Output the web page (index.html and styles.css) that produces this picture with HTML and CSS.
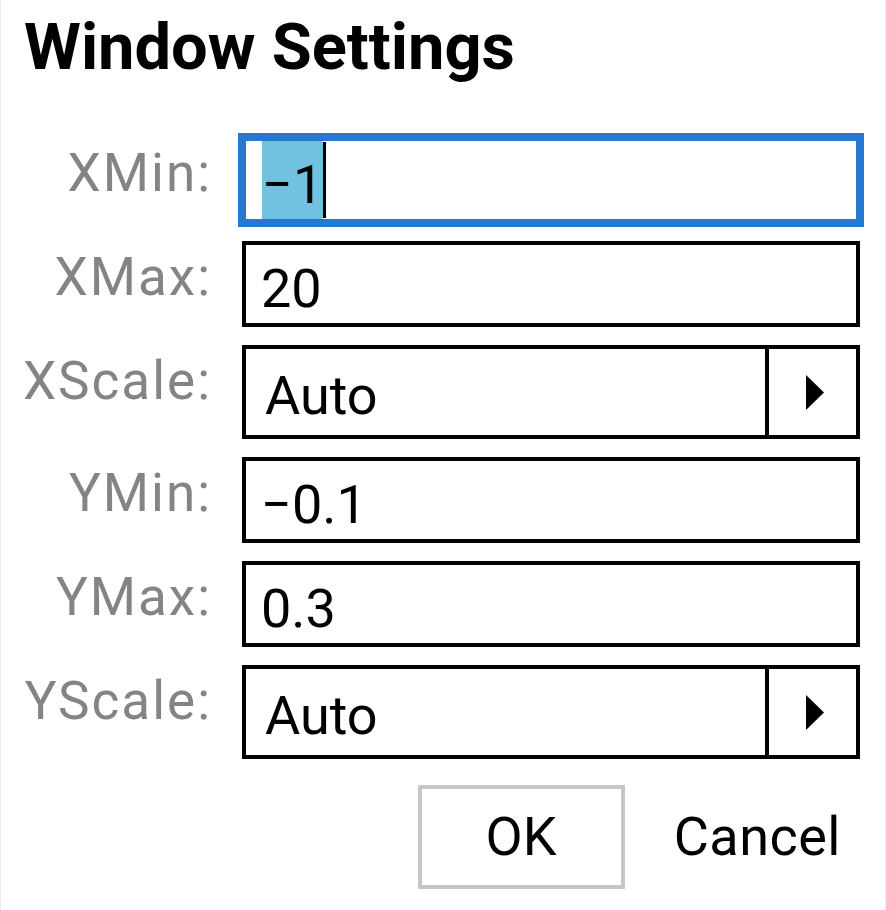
FILE: index.html
```html
<!DOCTYPE html>
<html lang="en">
<head>
<meta charset="utf-8">
<title>Window Settings</title>
<link rel="stylesheet" href="styles.css">
</head>
<body>
<div class="dialog">
  <h1 class="title">Window Settings</h1>
  <div class="form">
    <label class="label">XMin:</label>
    <div class="field field--focused"><span class="value value--selected">−1</span><span class="caret"></span></div>

    <label class="label">XMax:</label>
    <div class="field"><span class="value">20</span></div>

    <label class="label">XScale:</label>
    <div class="field field--select"><span class="value value--select">Auto</span><span class="arrow"><svg class="arrow-icon" width="18" height="35" viewBox="0 0 18 35"><polygon points="0,0 18,17.5 0,35" fill="#000"/></svg></span></div>

    <label class="label">YMin:</label>
    <div class="field"><span class="value">−0.1</span></div>

    <label class="label">YMax:</label>
    <div class="field"><span class="value">0.3</span></div>

    <label class="label">YScale:</label>
    <div class="field field--select"><span class="value value--select">Auto</span><span class="arrow"><svg class="arrow-icon" width="18" height="35" viewBox="0 0 18 35"><polygon points="0,0 18,17.5 0,35" fill="#000"/></svg></span></div>
  </div>
  <div class="actions">
    <button class="btn btn--ok">OK</button>
    <button class="btn btn--cancel">Cancel</button>
  </div>
</div>
</body>
</html>
```
FILE: styles.css
```css
html, body {
  margin: 0;
  padding: 0;
  background: #fff;
}

.dialog {
  width: 886px;
  height: 910px;
  box-sizing: border-box;
  border-left: 1px solid #ececec;
  border-right: 1px solid #ececec;
  font-family: Roboto, "Liberation Sans", sans-serif;
  color: #000;
  overflow: hidden;
}

.title {
  margin: 0;
  padding: 15px 0 0 23px;
  font-size: 65px;
  line-height: 65px;
  font-weight: 700;
  letter-spacing: 0;
}

.form {
  display: grid;
  grid-template-columns: 211px 618px;
  grid-template-rows: 86px 86px 94px 86px 86px 94px;
  column-gap: 30px;
  row-gap: 18px;
  margin-top: 57px;
}

.label {
  align-self: start;
  text-align: right;
  padding-top: 10px;
  font-size: 53px;
  line-height: 53px;
  color: #848484;
  letter-spacing: 2px;
}

.field {
  display: flex;
  box-sizing: border-box;
  border: 4px solid #000;
  background: #fff;
  padding-left: 15px;
}

.field--focused {
  border: 8px solid #2678d2;
  margin: -4px;
  padding-left: 16px;
}

.value {
  display: block;
  padding-top: 17px;
  font-size: 54px;
  line-height: 54px;
  white-space: nowrap;
}

.value--select {
  flex: 1;
  padding-top: 20px;
  padding-left: 4px;
}

.value--selected {
  background: #72c1e1;
}

.caret {
  width: 3px;
  margin: 1px 0;
  background: #000;
}

.arrow {
  width: 91px;
  box-sizing: border-box;
  border-left: 4px solid #000;
  display: flex;
  align-items: center;
  justify-content: center;
  padding-left: 5px;
}

.arrow-icon {
  display: block;
}

.actions {
  display: flex;
  justify-content: flex-end;
  align-items: center;
  gap: 49px;
  margin-top: 26px;
  padding-right: 44px;
}

.btn {
  font-family: Roboto, "Liberation Sans", sans-serif;
  font-size: 54px;
  line-height: 54px;
  color: #000;
  background: #fff;
  margin: 0;
  padding: 0;
  cursor: pointer;
}

.btn--ok {
  width: 207px;
  height: 104px;
  box-sizing: border-box;
  border: 4px solid #c6c6c6;
}

.btn--cancel {
  border: none;
  letter-spacing: 0.5px;
}
```
